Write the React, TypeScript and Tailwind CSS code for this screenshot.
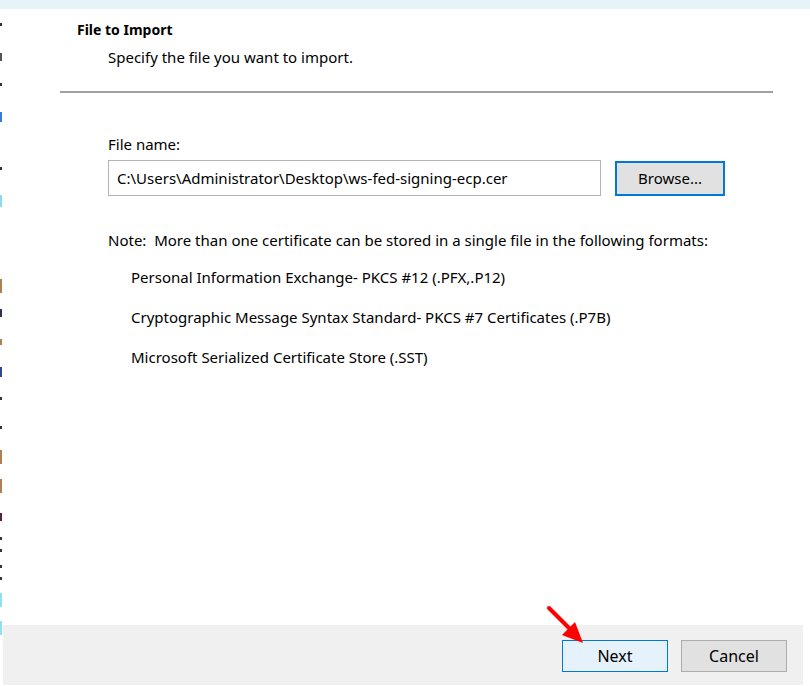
import React from 'react';

const marks: { top: number; h: number; color: string }[] = [
    { top: 14, h: 3, color: '#333' },
    { top: 44, h: 8, color: '#555' },
    { top: 74, h: 3, color: '#333' },
    { top: 103, h: 10, color: '#3a7bd5' },
    { top: 158, h: 3, color: '#333' },
    { top: 186, h: 12, color: '#8fd8f0' },
    { top: 270, h: 14, color: '#b08050' },
    { top: 300, h: 8, color: '#2a3550' },
    { top: 330, h: 6, color: '#b08050' },
    { top: 358, h: 10, color: '#2a4a8a' },
    { top: 388, h: 3, color: '#333' },
    { top: 417, h: 3, color: '#333' },
    { top: 441, h: 14, color: '#b08050' },
    { top: 470, h: 14, color: '#b08050' },
    { top: 504, h: 8, color: '#552244' },
    { top: 528, h: 3, color: '#333' },
    { top: 540, h: 3, color: '#333' },
    { top: 556, h: 3, color: '#333' },
    { top: 568, h: 3, color: '#333' },
    { top: 584, h: 14, color: '#8fe0f0' },
    { top: 612, h: 14, color: '#8fe0f0' },
];

const formats = [
    'Personal Information Exchange- PKCS #12 (.PFX,.P12)',
    'Cryptographic Message Syntax Standard- PKCS #7 Certificates (.P7B)',
    'Microsoft Serialized Certificate Store (.SST)',
];

export default function App() {
    return (
        <div
            className="w-[810px] h-[686px] bg-white flex flex-col relative overflow-hidden text-[15px] text-black"
            style={{ fontFamily: '"Noto Sans", "Open Sans", sans-serif' }}
        >
            <div className="h-[9px] bg-[#e6f4f7] shrink-0" />
            <div className="flex flex-1 min-h-0">
                <div className="w-[3px] relative shrink-0">
                    {marks.map((m, i) => (
                        <div
                            key={i}
                            className="absolute left-0 w-[2px]"
                            style={{ top: m.top, height: m.h, backgroundColor: m.color }}
                        />
                    ))}
                </div>
                <div className="flex-1 flex flex-col">
                    <div className="mt-[11px] pl-[74px] leading-[20px] font-bold text-[14px]">
                        File to Import
                    </div>
                    <div className="mt-[7px] pl-[105px] leading-[20px]">
                        Specify the file you want to import.
                    </div>
                    <div className="mt-[24px] ml-[57px] w-[713px] h-[2px] bg-[#a0a0a0]" />
                    <div className="mt-[41px] pl-[105px] leading-[20px]">File name:</div>
                    <div className="mt-[6px] pl-[105px] flex items-start gap-[14px]">
                        <div className="w-[493px] h-[36px] border border-[#b4b4b4] flex items-center pl-[8px]">
                            C:\Users\Administrator\Desktop\ws-fed-signing-ecp.cer
                        </div>
                        <button className="mt-[1px] w-[110px] h-[35px] bg-[#e1e1e1] border-2 border-[#0078d7] flex items-center justify-center">
                            Browse...
                        </button>
                    </div>
                    <div className="mt-[34px] pl-[105px] leading-[20px] whitespace-pre">
                        Note:  More than one certificate can be stored in a single file in the following formats:
                    </div>
                    <div className="mt-[17px] pl-[128px] flex flex-col gap-[20px] leading-[20px]">
                        {formats.map((f) => (
                            <div key={f}>{f}</div>
                        ))}
                    </div>
                    <div className="flex-1" />
                    <div className="h-[60px] mr-[7px] mb-[1px] bg-[#f0f0f0] flex justify-end items-start pt-[15px] pr-[16px] gap-[13px]">
                        <button className="w-[106px] h-[32px] bg-[#e5f1fb] border border-[#0078d7] text-[16px]">
                            Next
                        </button>
                        <button className="w-[106px] h-[32px] bg-[#e1e1e1] border border-[#adadad] text-[16px]">
                            Cancel
                        </button>
                    </div>
                </div>
            </div>
            <svg className="absolute left-[540px] top-[600px]" width="50" height="50" viewBox="0 0 50 50">
                <line x1="9" y1="8" x2="32" y2="31" stroke="#ff0000" strokeWidth="4" strokeLinecap="round" />
                <polygon points="43,43 22,35 35,22" fill="#ff0000" />
            </svg>
        </div>
    );
}
